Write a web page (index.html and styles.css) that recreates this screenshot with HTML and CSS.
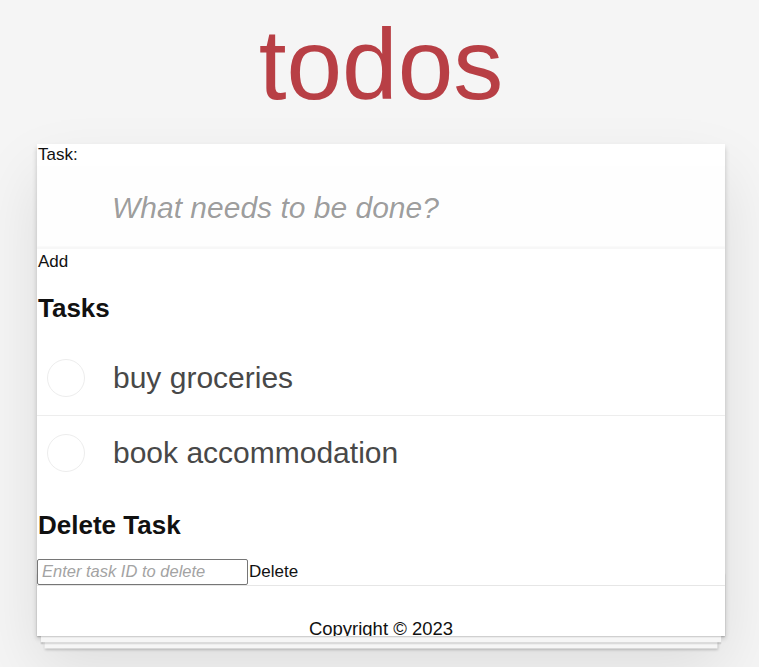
FILE: index.html
```html
<!DOCTYPE html>
<html lang="en">
<head>
<meta charset="utf-8">
<title>todos</title>
<link rel="stylesheet" href="styles.css">
</head>
<body>
<div class="page">
  <h1 class="title">todos</h1>
  <section class="todoapp">
    <form class="header">
      <label class="field-label" for="new-todo">Task:</label>
      <input id="new-todo" class="new-todo" type="text" placeholder="What needs to be done?">
      <button class="plain-btn add-btn" type="button">Add</button>
    </form>
    <h2 class="section-title tasks-title">Tasks</h2>
    <ul class="todo-list">
      <li class="todo-item"><span class="toggle"></span><label class="todo-label">buy groceries</label></li>
      <li class="todo-item"><span class="toggle"></span><label class="todo-label">book accommodation</label></li>
    </ul>
    <h2 class="section-title delete-title">Delete Task</h2>
    <div class="delete-row"><input class="delete-input" type="text" placeholder="Enter task ID to delete"><button class="plain-btn delete-btn" type="button">Delete</button></div>
    <footer class="footer"><p class="copyright">Copyright © 2023</p></footer>
  </section>
</div>
</body>
</html>
```
FILE: styles.css
```css
* { box-sizing: border-box; }

html, body { margin: 0; padding: 0; }

body {
  background: #f5f5f5;
  color: #111;
  font-family: "Liberation Sans", Arial, Helvetica, sans-serif;
  font-size: 16px;
  line-height: 1.4em;
}

.page {
  width: 688px;
  margin-left: 37px;
  padding-bottom: 31px;
}

.title {
  margin: 14px 0 30px;
  font-size: 100px;
  line-height: 100px;
  font-weight: 200;
  text-align: center;
  color: #b83f45;
}

.todoapp {
  position: relative;
  background: #fff;
  box-shadow: 0 2.5px 5px 0 rgba(0, 0, 0, 0.2), 0 31px 62px 0 rgba(0, 0, 0, 0.1);
}

.header { margin: 0; }

.field-label {
  display: block;
  padding-left: 1px;
  font-size: 17px;
  line-height: 22.4px;
}

.new-todo {
  display: block;
  width: 100%;
  margin: 0;
  padding: 20px 20px 20px 75px;
  border: none;
  outline: none;
  font-family: inherit;
  font-size: 30px;
  line-height: 42px;
  height: 83px;
  color: #484848;
  background: rgba(0, 0, 0, 0.003);
  box-shadow: inset 0 -2.5px 1.25px rgba(0, 0, 0, 0.03);
}

.new-todo::placeholder {
  font-style: italic;
  color: rgba(0, 0, 0, 0.4);
}

.plain-btn {
  margin: 0;
  padding: 0;
  border: none;
  background: none;
  font-family: inherit;
  font-size: 17px;
  color: #111;
  cursor: pointer;
}

.add-btn {
  display: block;
  padding: 2px 0 0 1px;
  line-height: 22.4px;
}

.section-title {
  margin: 0;
  padding-left: 1px;
  font-size: 26px;
  line-height: 30px;
  font-weight: bold;
  color: #111;
}

.tasks-title { margin-top: 19px; }

.todo-list {
  list-style: none;
  margin: 18px 0 0;
  padding: 0;
}

.todo-item {
  display: flex;
  align-items: center;
  padding-left: 10px;
  border-bottom: 1px solid #ededed;
}

.todo-item:last-child { border-bottom: none; }

.toggle {
  flex: none;
  width: 38px;
  height: 38px;
  border: 1px solid #ededed;
  border-radius: 50%;
}

.todo-label {
  margin-left: 28px;
  padding: 19px 0;
  font-size: 30px;
  line-height: 36px;
  color: #484848;
}

.delete-title { margin-top: 20px; }

.delete-row {
  display: flex;
  align-items: center;
  margin-top: 19px;
}

.delete-input {
  width: 211px;
  height: 26px;
  margin: 0;
  padding: 1px 4px;
  border: 1px solid #767676;
  border-radius: 2px;
  font-family: inherit;
  font-size: 16.5px;
  color: #111;
  background: #fff;
}

.delete-input::placeholder {
  font-style: italic;
  color: #a3a3a3;
}

.delete-btn {
  margin-left: 1px;
  line-height: 18px;
}

.footer {
  position: relative;
  height: 51px;
  padding: 12.5px 18.75px;
  border-top: 1px solid #e6e6e6;
  text-align: center;
}

.footer::before {
  content: "";
  position: absolute;
  left: 0;
  right: 0;
  bottom: 0;
  height: 62.5px;
  box-shadow: 0 1.25px 1.25px rgba(0, 0, 0, 0.2),
              0 10px 0 -3.75px #f6f6f6,
              0 11.25px 1.25px -3.75px rgba(0, 0, 0, 0.2),
              0 20px 0 -7.5px #f6f6f6,
              0 21.25px 2.5px -7.5px rgba(0, 0, 0, 0.2);
  pointer-events: none;
}

.copyright {
  margin: 18px 0 0;
  font-size: 18.5px;
  line-height: 26px;
  color: #111;
}
```
